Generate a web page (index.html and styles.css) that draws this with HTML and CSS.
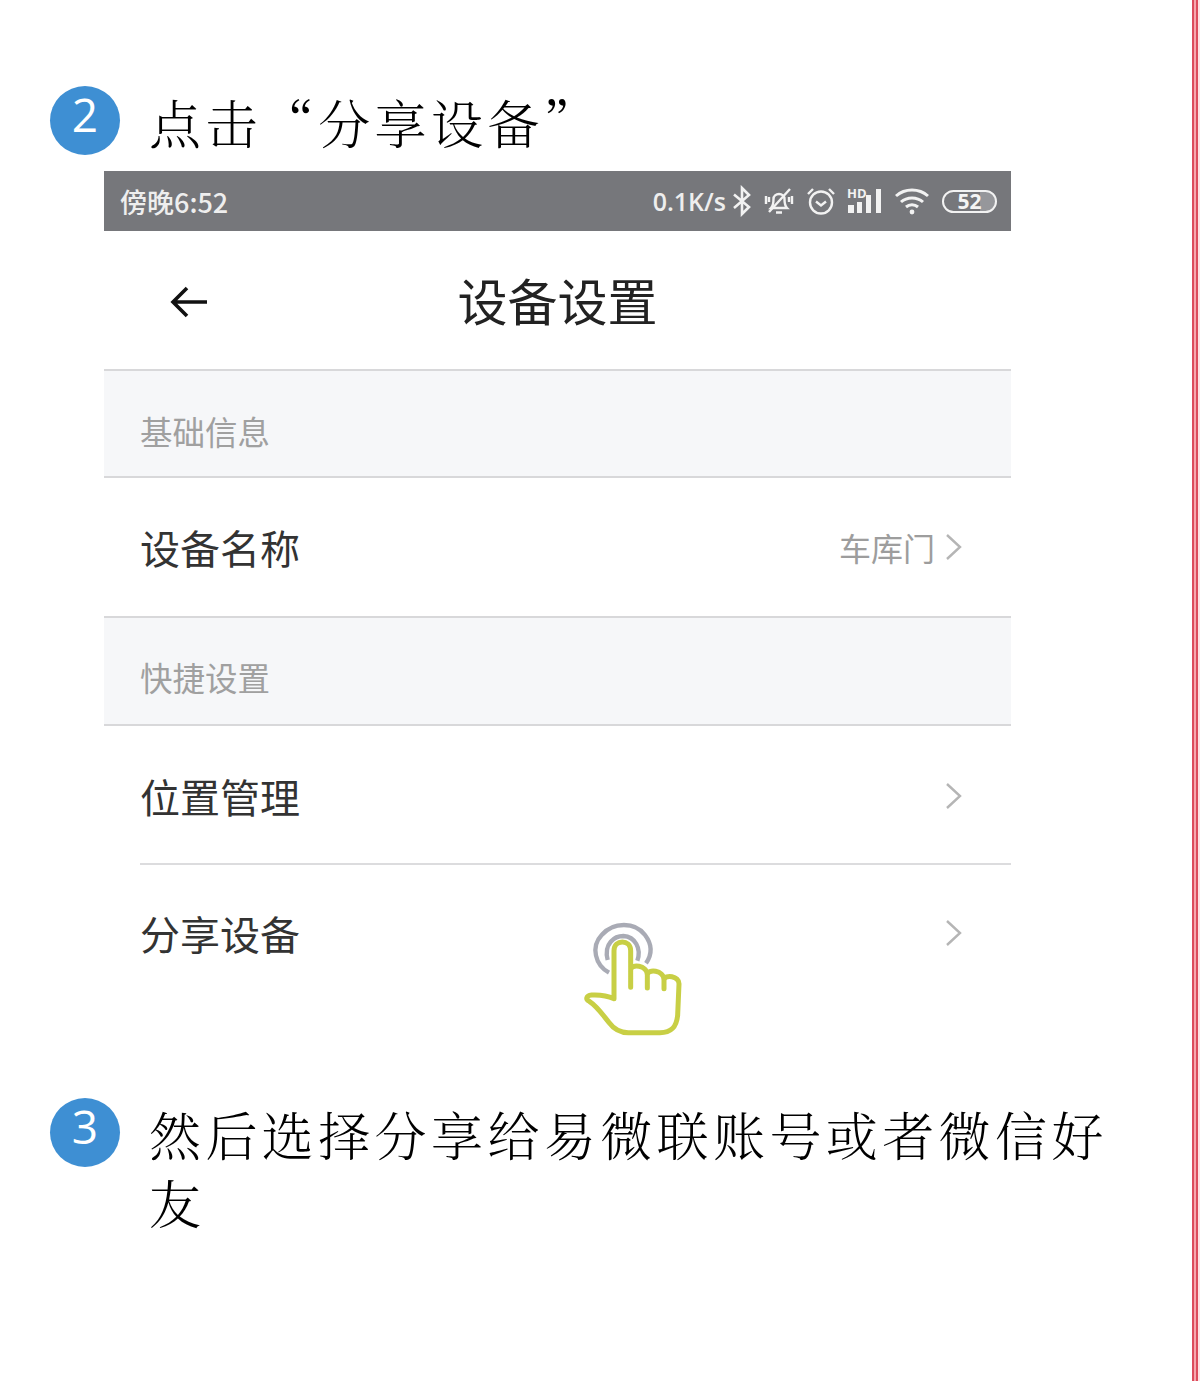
FILE: index.html
```html
<!DOCTYPE html>
<html lang="zh-CN">
<head>
<meta charset="utf-8">
<title>分享设备</title>
<link rel="stylesheet" href="styles.css">
</head>
<body>
<div class="page">
  <main class="content">
    <div class="step">
      <span class="badge">2</span>
      <h2 class="step-text">点击“分享设备”</h2>
    </div>
    <section class="phone">
      <div class="status">
        <span class="time">傍晚6:52</span>
        <div class="status-right">
          <span class="speed">0.1K/s</span>
          <svg class="ic" width="20" height="32" viewBox="0 0 20 32"><path d="M2 9.500 17 22 10 29V3l7 7L2 23" fill="none" stroke="#f2f2f2" stroke-width="2.600"/></svg>
          <svg class="ic ic-bell" width="30" height="30" viewBox="0 0 30 30" fill="none" stroke="#f2f2f2" stroke-width="2.400"><path d="M7 22h16c-2-2-2.500-4.500-2.500-9 0-3-2.500-5-5.500-5s-5.500 2-5.500 5c0 4.500-.5 7-2.500 9Z"/><path d="M12 26.500h6M26 3 5 26M2 10v8M28 10v8M5 11v5M25 11v5"/></svg>
          <svg class="ic ic-alarm" width="30" height="30" viewBox="0 0 30 30" fill="none" stroke="#f2f2f2" stroke-width="2.400"><circle cx="15" cy="16.500" r="11"/><path d="M10 15.500l5 4 5-4M2 8l5-5M28 8l-5-5"/></svg>
          <svg class="ic ic-signal" width="35" height="38" viewBox="0 -4 35 38"><text x="0" y="12" class="hd">HD</text><path d="M1 27h6v-8H1ZM10 27h5V16h-5ZM19 27h5V9h-5ZM29 27h5V3h-5Z" fill="#f2f2f2"/></svg>
          <svg class="ic ic-wifi" width="36" height="30" viewBox="0 0 36 30" fill="none" stroke="#f2f2f2" stroke-width="3"><path d="M2 10c9-8 23-8 32 0M7 16c6-5.500 16-5.500 22 0M12 21c3.500-3 8.500-3 12 0"/><circle cx="18" cy="26" r="2.400" fill="#f2f2f2" stroke="none"/></svg>
          <span class="battery"><span class="level">52</span></span>
        </div>
      </div>
      <header class="nav">
        <svg class="back" width="42" height="36" viewBox="0 0 42 36" fill="none" stroke="#111" stroke-width="3.600"><path d="M39 18H5M19 4 5 18l14 14"/></svg>
        <h1 class="nav-title">设备设置</h1>
      </header>
      <div class="section">基础信息</div>
      <div class="row row-first">
        <span class="label">设备名称</span>
        <span class="value">车库门</span>
        <svg class="chev" width="18" height="30" viewBox="0 0 18 30"><path d="M2 3 15 15 2 27" fill="none" stroke="#b5b5b5" stroke-width="2.400"/></svg>
      </div>
      <div class="section section-two">快捷设置</div>
      <div class="row row-inset">
        <span class="label">位置管理</span>
        <svg class="chev" width="18" height="30" viewBox="0 0 18 30"><path d="M2 3 15 15 2 27" fill="none" stroke="#b5b5b5" stroke-width="2.400"/></svg>
      </div>
      <div class="row row-last">
        <span class="label">分享设备</span>
        <svg class="chev" width="18" height="30" viewBox="0 0 18 30"><path d="M2 3 15 15 2 27" fill="none" stroke="#b5b5b5" stroke-width="2.400"/></svg>
        <svg class="hand" width="150" height="150" viewBox="0 0 450 450" fill="none">
          <path d="M147 218C105 195 92 140 125 105C160 65 225 65 255 105C278 135 275 165 258 190" stroke="#a9abb5" stroke-width="13"/>
          <path d="M143 180C130 130 165 108 190 108C225 110 245 145 232 182" stroke="#a9abb5" stroke-width="13"/>
          <path d="M212 262V152C212 117 162 117 162 152V296C140 286 115 284 95 285 78 287 76 298 88 304 110 318 125 340 145 365 162 388 180 398 205 398H300C335 398 350 380 353 345L357 252C358 228 315 222 312 240V266M312 240C312 210 262 205 262 225V264M262 225C262 195 212 190 212 210" stroke="#c8cf45" stroke-width="15" stroke-linecap="round" stroke-linejoin="round"/>
        </svg>
      </div>
    </section>
    <div class="step step-three">
      <span class="badge">3</span>
      <h2 class="step-text">然后选择分享给易微联账号或者微信好友</h2>
    </div>
  </main>
  <div class="edge"></div>
</div>
</body>
</html>
```
FILE: styles.css
```css
* { box-sizing: border-box; }
html, body { margin: 0; padding: 0; background: #fff; }
body { font-family: "Noto Sans CJK SC", "Noto Sans", sans-serif; }
.page { display: flex; width: 1200px; height: 1381px; overflow: hidden; }
.content { width: 1192px; padding: 86px 0 0 50px; }
.edge {
  width: 8px;
  background: linear-gradient(90deg, #dc4c5c 0 2px, #f6a8ae 2px 4px, #dc4c5c 4px 6px, #fde3e4 6px 8px);
}
.step { display: flex; align-items: flex-start; gap: 28px; }
.badge {
  flex: none;
  width: 70px;
  height: 69px;
  border-radius: 50%;
  background: #3e8fd3;
  color: #fff;
  font: 500 46px/56px "Open Sans", sans-serif;
  text-align: center;
}
.step-text {
  margin: 0;
  padding: 2px 0 0 1px;
  width: 980px;
  font-family: "Noto Serif CJK SC", "Source Han Serif SC", "Noto Sans CJK SC", serif;
  font-weight: 300;
  font-size: 52px;
  letter-spacing: 4.400px;
  line-height: 68px;
  color: #000;
}
.phone { width: 907px; margin: 15px 0 0 54px; }
.status {
  display: flex;
  align-items: center;
  justify-content: space-between;
  height: 60px;
  padding: 0 14px 0 16px;
  background: #76777b;
  color: #eee;
}
.time { font: 500 27px/1 "Noto Sans CJK SC", sans-serif; }
.status-right { display: flex; align-items: center; }
.speed { font: 600 25px/1 "Open Sans", sans-serif; margin-right: 6px; }
.ic { display: block; }
.ic-bell { margin-left: 12px; }
.ic-alarm { margin-left: 12px; }
.ic-signal { margin-left: 11px; }
.ic-wifi { margin-left: 12px; }
.hd { font: 700 13px "Open Sans", sans-serif; fill: #f2f2f2; }
.battery {
  width: 55px;
  height: 23px;
  margin-left: 12px;
  border: 2px solid #f2f2f2;
  border-radius: 12px;
  display: flex;
  justify-content: center;
  align-items: center;
  background: linear-gradient(90deg, transparent 0 70%, #96979b 70%);
}
.level { font: 700 21px/1 "Open Sans", sans-serif; color: #f4f4f4; }
.nav {
  display: flex;
  align-items: center;
  justify-content: center;
  position: relative;
  height: 140px;
  padding-bottom: 3px;
  border-bottom: 2px solid #d8d8da;
}
.back { position: absolute; left: 64px; top: 53px; }
.nav-title { margin: 0; font-size: 50px; font-weight: 400; color: #222; line-height: 1; }
.section {
  height: 107px;
  padding: 42px 0 0 36px;
  background: #f6f7f9;
  color: #a0a0a0;
  font-size: 32.500px;
  line-height: 36px;
  border-bottom: 2px solid #d8d8da;
}
.section-two { height: 108px; padding-top: 41px; }
.row {
  position: relative;
  display: flex;
  align-items: center;
  padding-left: 36px;
  font-size: 40px;
  color: #333;
}
.row-first { height: 140px; border-bottom: 2px solid #d8d8da; }
.row-inset { height: 139px; }
.row-inset::after {
  content: "";
  position: absolute;
  left: 36px;
  right: 0;
  bottom: 0;
  height: 2px;
  background: #dcdcde;
}
.row-last { height: 135px; }
.label { flex: 1; line-height: 1; }
.value { font-size: 32px; color: #9d9d9d; line-height: 1; margin-right: 10px; }
.chev { margin-right: 48px; flex: none; }
.hand { position: absolute; left: 456px; top: 35px; }
.step-three { margin-top: 98px; }
```
